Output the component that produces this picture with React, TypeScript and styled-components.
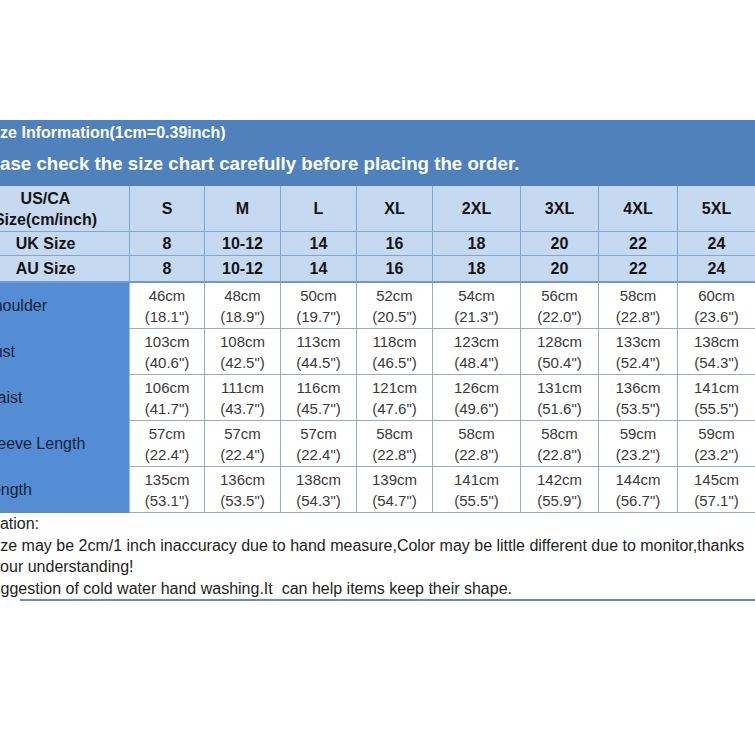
import React from 'react';
import styled, { createGlobalStyle } from 'styled-components';

const GlobalStyle = createGlobalStyle`
  html, body {
    margin: 0;
    padding: 0;
    background: #ffffff;
  }
  body {
    font-family: "Liberation Sans", Arial, sans-serif;
    overflow: hidden;
  }
`;

const sizes = ['S', 'M', 'L', 'XL', '2XL', '3XL', '4XL', '5XL'];
const ukSizes = ['8', '10-12', '14', '16', '18', '20', '22', '24'];

const measures = [
  {
    label: 'Shoulder',
    values: [
      ['46', '18.1'], ['48', '18.9'], ['50', '19.7'], ['52', '20.5'],
      ['54', '21.3'], ['56', '22.0'], ['58', '22.8'], ['60', '23.6'],
    ],
  },
  {
    label: 'Bust',
    values: [
      ['103', '40.6'], ['108', '42.5'], ['113', '44.5'], ['118', '46.5'],
      ['123', '48.4'], ['128', '50.4'], ['133', '52.4'], ['138', '54.3'],
    ],
  },
  {
    label: 'Waist',
    values: [
      ['106', '41.7'], ['111', '43.7'], ['116', '45.7'], ['121', '47.6'],
      ['126', '49.6'], ['131', '51.6'], ['136', '53.5'], ['141', '55.5'],
    ],
  },
  {
    label: 'Sleeve Length',
    values: [
      ['57', '22.4'], ['57', '22.4'], ['57', '22.4'], ['58', '22.8'],
      ['58', '22.8'], ['58', '22.8'], ['59', '23.2'], ['59', '23.2'],
    ],
  },
  {
    label: 'Length',
    values: [
      ['135', '53.1'], ['136', '53.5'], ['138', '54.3'], ['139', '54.7'],
      ['141', '55.5'], ['142', '55.9'], ['144', '56.7'], ['145', '57.1'],
    ],
  },
];

export default function App() {
  return (
    <Page>
      <GlobalStyle />
      <Banner>
        <BannerLine $size={16} $cut={15}>
          Size Information(1cm=0.39inch)
        </BannerLine>
        <BannerLine $size={18.7} $cut={28}>
          Please check the size chart carefully before placing the order.
        </BannerLine>
      </Banner>

      <Table>
        <Cell $tone="head">
          <Stack>
            <span>US/CA</span>
            <span>Size(cm/inch)</span>
          </Stack>
        </Cell>
        {sizes.map((s) => (
          <Cell key={s} $tone="head">{s}</Cell>
        ))}

        <Cell $tone="head">UK Size</Cell>
        {ukSizes.map((s, i) => (
          <Cell key={'uk' + i} $tone="head">{s}</Cell>
        ))}

        <Cell $tone="head" $thick>AU Size</Cell>
        {ukSizes.map((s, i) => (
          <Cell key={'au' + i} $tone="head" $thick>{s}</Cell>
        ))}

        {measures.map((m) => (
          <React.Fragment key={m.label}>
            <Cell $tone="label">{m.label}</Cell>
            {m.values.map(([cm, inch], i) => (
              <Cell key={m.label + i} $tone="data">
                <Stack>
                  <span>{cm}cm</span>
                  <span>({inch}")</span>
                </Stack>
              </Cell>
            ))}
          </React.Fragment>
        ))}
      </Table>

      <Notes>
        <NoteLine $cut={49}>Explanation:</NoteLine>
        <NoteLine $cut={14}>
          Size may be 2cm/1 inch inaccuracy due to hand measure,Color may be little different due to monitor,thanks
        </NoteLine>
        <NoteLine $cut={31}>for your understanding!</NoteLine>
        <NoteLine $cut={19}>
          Suggestion of cold water hand washing.It&nbsp; can help items keep their shape.
        </NoteLine>
      </Notes>
      <Rule />
    </Page>
  );
}

const Page = styled.div`
  width: 755px;
  height: 755px;
  overflow: hidden;
  padding-top: 120px;
  box-sizing: border-box;
`;

const Banner = styled.header`
  height: 66px;
  box-sizing: border-box;
  padding-top: 2px;
  background: #4f81bd;
  color: #ffffff;
  display: flex;
  flex-direction: column;
  gap: 9px;
  font-weight: bold;
`;

const BannerLine = styled.div<{ $size: number; $cut: number }>`
  font-size: ${(p) => p.$size}px;
  line-height: ${(p) => Math.round(p.$size + 5)}px;
  margin-left: -${(p) => p.$cut}px;
  white-space: nowrap;
`;

const Table = styled.div`
  display: grid;
  grid-template-columns: 168px 75px 76px 76px 76px 88px 78px 79px 78px;
  grid-template-rows: 46px 24px 27px repeat(5, 46px);
  width: 794px;
  margin-left: -38px;
`;

type Tone = 'head' | 'label' | 'data';

const tones: Record<Tone, { bg: string; line: string; bottom: string; color: string }> = {
  head: { bg: '#c5d9f1', line: '#7fa5d6', bottom: '#7fa5d6', color: '#141414' },
  label: { bg: '#548dd4', line: '#a9bdd6', bottom: '#548dd4', color: '#14243a' },
  data: { bg: '#ffffff', line: '#98abc2', bottom: '#98abc2', color: '#3a3a3a' },
};

const Cell = styled.div<{ $tone: Tone; $thick?: boolean }>`
  box-sizing: border-box;
  display: flex;
  align-items: center;
  justify-content: ${(p) => (p.$tone === 'label' ? 'flex-start' : 'center')};
  padding-left: ${(p) => (p.$tone === 'label' ? '21px' : '0')};
  background: ${(p) => tones[p.$tone].bg};
  color: ${(p) => tones[p.$tone].color};
  border-right: 1px solid ${(p) => tones[p.$tone].line};
  border-bottom: ${(p) => (p.$thick ? '2px' : '1px')} solid
    ${(p) => (p.$thick ? '#6f98cf' : tones[p.$tone].bottom)};
  font-size: ${(p) => (p.$tone === 'data' ? '15px' : '16px')};
  font-weight: ${(p) => (p.$tone === 'head' ? 'bold' : 'normal')};
  text-align: center;
  white-space: nowrap;
`;

const Stack = styled.div`
  display: flex;
  flex-direction: column;
  align-items: center;
  line-height: 21px;
`;

const Notes = styled.div`
  font-size: 16px;
  line-height: 21.5px;
  color: #1e1e1e;
`;

const NoteLine = styled.div<{ $cut: number }>`
  margin-left: -${(p) => p.$cut}px;
  white-space: nowrap;
`;

const Rule = styled.div`
  height: 2px;
  margin-left: 20px;
  background: #6890b4;
`;
